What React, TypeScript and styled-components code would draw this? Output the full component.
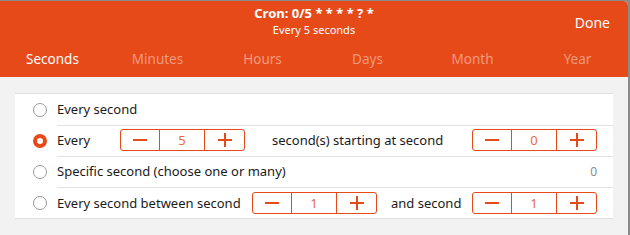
import styled, { createGlobalStyle } from "styled-components";

const ORANGE = "#e64a19";

const Global = createGlobalStyle`
  html, body { margin: 0; padding: 0; background: #8a8a8a; }
  body { font-family: "Noto Sans", "Open Sans", sans-serif; }
`;

const Window = styled.div`
  width: 628px;
  height: 234px;
  margin-top: 1px;
  background: #f2f2f2;
  border-top-right-radius: 5px;
  overflow: hidden;
  display: flex;
  flex-direction: column;
`;

const Header = styled.div`
  background: ${ORANGE};
  color: #fff;
  height: 76px;
  display: flex;
  flex-direction: column;
`;

const TitleBar = styled.div`
  height: 40px;
  position: relative;
  display: flex;
  flex-direction: column;
  align-items: center;
  justify-content: center;
`;

const Title = styled.div`
  font-size: 13px;
  font-weight: 700;
  line-height: 17px;
`;

const Subtitle = styled.div`
  font-size: 11px;
  line-height: 15px;
`;

const Done = styled.button`
  position: absolute;
  right: 18px;
  top: 12px;
  border: 0;
  background: none;
  color: #fff;
  font: 14px "Noto Sans", sans-serif;
  padding: 0;
`;

const Tabs = styled.div`
  display: grid;
  grid-template-columns: repeat(6, 105px);
  height: 36px;
  align-items: center;
`;

const Tab = styled.div<{ $active?: boolean }>`
  text-align: center;
  font-size: 13.5px;
  color: ${(p) => (p.$active ? "#fff" : "rgba(255,255,255,0.45)")};
`;

const Body = styled.div`
  padding: 16px 15px 0 15px;
`;

const Card = styled.div`
  background: #fff;
  border-top: 1px solid #e0e0e0;
  border-bottom: 1px solid #e0e0e0;
  width: 598px;
`;

const Row = styled.div`
  display: flex;
  align-items: center;
  height: 31px;
  padding-left: 18px;
`;

const RowInner = styled.div<{ $last?: boolean }>`
  flex: 1;
  display: flex;
  align-items: center;
  height: 100%;
  margin-left: 10px;
  border-bottom: ${(p) => (p.$last ? "none" : "1px solid #e2e2e2")};
  font-size: 13px;
  color: #1a1a1a;
  padding-right: 16px;
`;

const Radio = styled.span<{ $checked?: boolean }>`
  width: 14px;
  height: 14px;
  border-radius: 50%;
  box-sizing: border-box;
  flex: none;
  border: ${(p) => (p.$checked ? `4px solid ${ORANGE}` : "1px solid #9a9a9a")};
  background: #fff;
`;

const Label = styled.span<{ $w?: number }>`
  width: ${(p) => (p.$w ? `${p.$w}px` : "auto")};
  flex: none;
  white-space: nowrap;
`;

const Stepper = styled.div`
  display: grid;
  grid-template-columns: 38px 46px 39px;
  width: 125px;
  height: 22px;
  box-sizing: border-box;
  border: 1px solid ${ORANGE};
  border-radius: 3px;
  flex: none;
`;

const StepBtn = styled.div`
  display: flex;
  align-items: center;
  justify-content: center;
`;

const StepValue = styled.div`
  display: flex;
  align-items: center;
  justify-content: center;
  border-left: 1px solid ${ORANGE};
  border-right: 1px solid ${ORANGE};
  color: #ea6a3c;
  font-size: 13px;
`;

const Minus = () => (
  <svg width="14" height="14" viewBox="0 0 14 14">
    <rect x="0" y="6" width="14" height="2" fill={ORANGE} />
  </svg>
);

const Plus = () => (
  <svg width="14" height="14" viewBox="0 0 14 14">
    <rect x="0" y="6" width="14" height="2" fill={ORANGE} />
    <rect x="6" y="0" width="2" height="14" fill={ORANGE} />
  </svg>
);

const Count = styled.span`
  margin-left: auto;
  color: #8a8a8a;
  font-size: 12px;
`;

const Spacer = styled.span<{ $w: number }>`
  width: ${(p) => p.$w}px;
  flex: none;
`;

const Step = ({ value }: { value: number }) => (
  <Stepper>
    <StepBtn>
      <Minus />
    </StepBtn>
    <StepValue>{value}</StepValue>
    <StepBtn>
      <Plus />
    </StepBtn>
  </Stepper>
);

const tabs = ["Seconds", "Minutes", "Hours", "Days", "Month", "Year"];

export default function App() {
  return (
    <>
      <Global />
      <Window>
        <Header>
          <TitleBar>
            <Title>Cron: 0/5 * * * * ? *</Title>
            <Subtitle>Every 5 seconds</Subtitle>
            <Done>Done</Done>
          </TitleBar>
          <Tabs>
            {tabs.map((t, i) => (
              <Tab key={t} $active={i === 0}>
                {t}
              </Tab>
            ))}
          </Tabs>
        </Header>
        <Body>
          <Card>
            <Row>
              <Radio />
              <RowInner>
                <Label>Every second</Label>
              </RowInner>
            </Row>
            <Row>
              <Radio $checked />
              <RowInner>
                <Label $w={63}>Every</Label>
                <Step value={5} />
                <Spacer $w={27} />
                <Label $w={200}>second(s) starting at second</Label>
                <Step value={0} />
              </RowInner>
            </Row>
            <Row>
              <Radio />
              <RowInner>
                <Label>Specific second (choose one or many)</Label>
                <Count>0</Count>
              </RowInner>
            </Row>
            <Row>
              <Radio />
              <RowInner $last>
                <Label $w={195}>Every second between second</Label>
                <Step value={1} />
                <Spacer $w={14} />
                <Label $w={81}>and second</Label>
                <Step value={1} />
              </RowInner>
            </Row>
          </Card>
        </Body>
      </Window>
    </>
  );
}
